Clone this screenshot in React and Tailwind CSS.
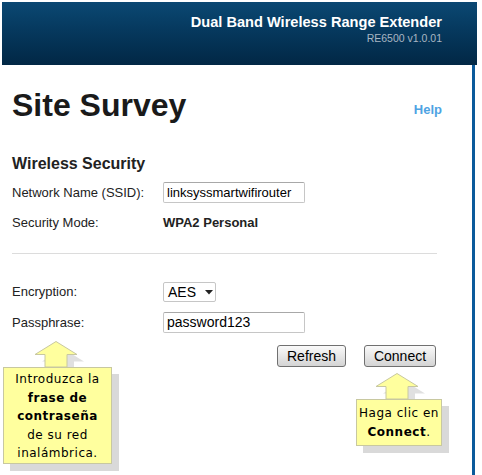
import React from "react";

const Callout = ({ className, arrowX, children, boxClass }) => (
  <div className={"absolute " + className}>
    <svg className="absolute overflow-visible" style={{ left: arrowX - 22, top: 0 }} width="44" height="27" viewBox="0 0 44 27">
      <path d="M22 0.5 L43 13.5 L33 13.5 L33 27 L11 27 L11 13.5 L1 13.5 Z" fill="#d8d8d8" transform="translate(7 7)" opacity="0.8" />
      <path d="M22 0.5 L43 13.5 L33 13.5 L33 26 L11 26 L11 13.5 L1 13.5 Z" fill="#ffff9e" stroke="#c8c8a0" strokeWidth="1" />
    </svg>
    <div className={"absolute bg-[#d9d9d9] " + boxClass} style={{ left: 7, top: 33 }} />
    <div
      className={"absolute bg-[#ffff9e] border border-[#c8c8a0] text-center text-[12px] leading-[18.5px] text-black " + boxClass}
      style={{ left: 0, top: 26, fontFamily: '"DejaVu Sans", Verdana, sans-serif', letterSpacing: "0.5px" }}
    >
      {children}
    </div>
  </div>
);

export default function App() {
  return (
    <div className="relative w-[482px] h-[475px] bg-white overflow-hidden" style={{ fontFamily: '"Liberation Sans", Arial, sans-serif' }}>
      <div className="ml-[2px] mt-[2px] w-[475px] h-[63px] bg-gradient-to-b from-[#0b4873] to-[#022745] flex flex-col items-end pr-[35px] pt-[11px]">
        <div className="text-white font-bold text-[14.6px] leading-[18px]">Dual Band Wireless Range Extender</div>
        <div className="text-[#a9b6c3] text-[10.5px] leading-[12px] mt-[1px]">RE6500 v1.0.01</div>
      </div>

      <div className="flex h-[410px]">
        <div className="w-[472px] pl-[12px] pr-[30px]">
          <div className="flex items-center justify-between mt-[24px] h-[32px]">
            <h1 className="text-[32px] leading-[32px] font-bold text-[#1a1a1a]">Site Survey</h1>
            <a className="text-[13px] font-bold text-[#4ea3e3] mt-[10px]">Help</a>
          </div>

          <h2 className="mt-[33px] text-[16px] leading-[20px] font-bold text-[#222]">Wireless Security</h2>

          <div className="mt-[8px] flex items-center h-[21px] text-[13px] text-[#222]">
            <span className="w-[151px]">Network Name (SSID):</span>
            <div className="w-[142px] h-[21px] border border-[#c6c6c6] border-t-[#a8a8a8] rounded-[2px] px-[3px] leading-[19px] text-black">linksyssmartwifirouter</div>
          </div>

          <div className="mt-[10px] flex items-center h-[20px] text-[13px] text-[#222]">
            <span className="w-[151px]">Security Mode:</span>
            <span className="font-bold">WPA2 Personal</span>
          </div>

          <div className="mt-[20px] w-[425px] h-px bg-[#dcdcdc]" />

          <div className="mt-[28px] flex items-center h-[20px] text-[13px] text-[#222]">
            <span className="w-[151px]">Encryption:</span>
            <div className="w-[53px] h-[20px] border border-[#c6c6c6] rounded-[2px] flex items-center pl-[4px] text-[14px] text-black">
              AES
              <svg className="ml-[9px]" width="8" height="5" viewBox="0 0 8 5"><path d="M0 0 H8 L4 4.5 Z" fill="#222" /></svg>
            </div>
          </div>

          <div className="mt-[10px] flex items-center h-[21px] text-[13px] text-[#222]">
            <span className="w-[151px]">Passphrase:</span>
            <div className="w-[142px] h-[21px] border border-[#c6c6c6] border-t-[#a8a8a8] rounded-[2px] px-[3px] leading-[19px] text-[14px] text-black">password123</div>
          </div>

          <div className="mt-[12px] flex justify-end gap-[18px] pr-[6px]">
            <button className="w-[69px] h-[22px] border border-[#707070] rounded-[3px] bg-gradient-to-b from-[#fafafa] to-[#d4d4d4] text-[14px] leading-[18px] text-black">Refresh</button>
            <button className="w-[72px] h-[22px] border border-[#707070] rounded-[3px] bg-gradient-to-b from-[#fafafa] to-[#d4d4d4] text-[14px] leading-[18px] text-black">Connect</button>
          </div>
        </div>
        <div className="w-[3px] bg-[#0a5a9b]" />
      </div>

      <Callout className="left-[3px] top-[341px]" arrowX={53} boxClass="w-[109px] h-[97px] pt-[2px]">
        <div>Introduzca la</div>
        <div className="font-bold">frase de</div>
        <div className="font-bold">contraseña</div>
        <div>de su red</div>
        <div>inalámbrica.</div>
      </Callout>

      <Callout className="left-[356px] top-[373px]" arrowX={41} boxClass="w-[86px] h-[47px] pt-[4px]">
        <div>Haga clic en</div>
        <div><span className="font-bold">Connect</span>.</div>
      </Callout>
    </div>
  );
}
